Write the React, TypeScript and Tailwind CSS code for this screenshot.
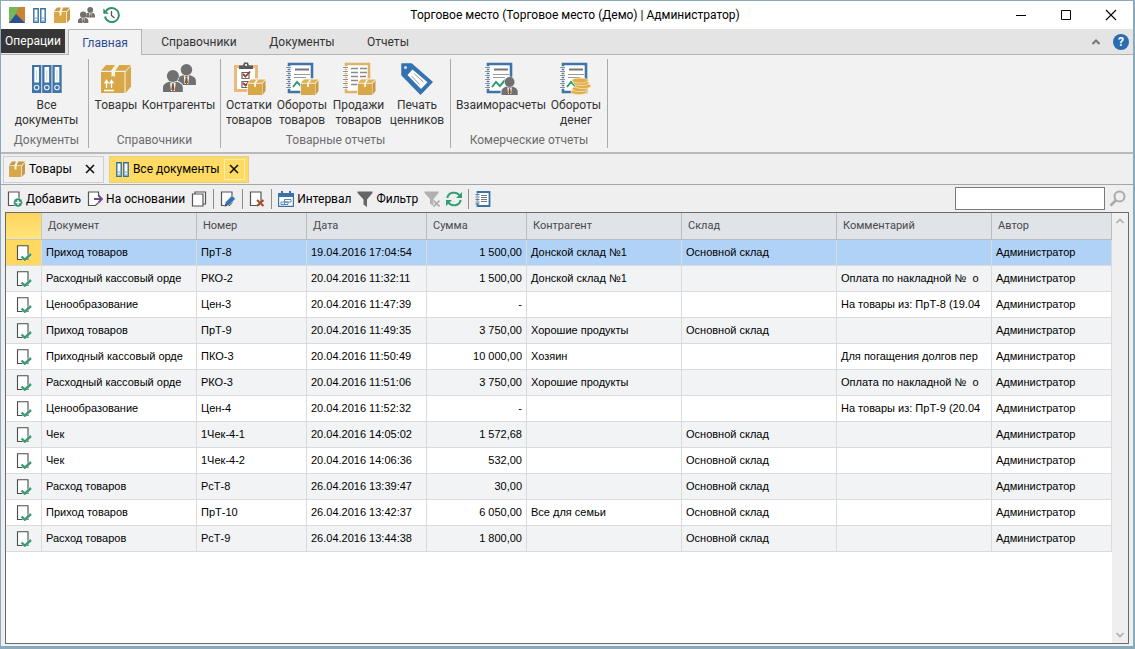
import { useState, type ReactNode } from "react";

type IconProps = { className?: string };

function svg(viewBox: string, body: ReactNode) {
  return function Icon({ className }: IconProps) {
    return (
      <svg viewBox={viewBox} className={className} fill="none" aria-hidden="true">
        {body}
      </svg>
    );
  };
}

const binder = (x: number) => (
  <g key={x}>
    <path d={`M${x} 3h9.300v28h-9.300z`} fill="#3f74a8" />
    <path d={`M${x + 2.3} 5h4.600v15.500h-4.600z`} fill="#fff" />
    <path d={`M${x + 4.6} 8v10`} stroke="#c3d3e2" />
    <circle cx={x + 4.6} cy="25.500" r="2.3" stroke="#e8eff6" strokeWidth="1.1" />
  </g>
);

const notebook = (color: string) => (
  <>
    <path d="M4 2h23v28H4z" fill="#fff" stroke={color} strokeWidth="2.6" />
    <path d="M1 5.5h5M1 9.5h5M1 13.5h5M1 17.5h5M1 21.5h5M1 25.5h5" stroke="#fff" strokeWidth="2.4" />
    <path d="M1 5.5h5M1 9.5h5M1 13.5h5M1 17.5h5M1 21.5h5M1 25.5h5" stroke="#8a8f96" strokeWidth="1.2" />
  </>
);

const reportLines = (
  <>
    <path d="M10 7.5h14" stroke="#777" strokeWidth="2" />
    <path d="M9 12.5h16M9 15.5h12" stroke="#9a9a9a" />
    <path d="M8 25l4-5 4 4 5-6" stroke="#2f9c74" strokeWidth="2" />
  </>
);

const smallBox = (
  <g>
    <path d="M16 22l3-5h14.500l-2 5v11H16z" fill="#f2f2f2" stroke="#f2f2f2" strokeWidth="1.500" />
    <path d="M16 21.500h14v11.500H16z" fill="#d8a748" />
    <path d="M16 21l3-3.500h14.500l-3.500 3.500z" fill="#deb25a" />
    <path d="M30.500 21.500l3-3.500v11l-3 4z" fill="#c99a42" />
    <path d="M16 21.300h14.500l3-3.500" stroke="#f8ecd0" strokeWidth=".8" />
    <path d="M22 21.300l2.300-3.600h2L24 21.300v4l-1-.8-1 .8z" fill="#fdf4df" />
  </g>
);

const person = (x: number, y: number, k: number, halo: string) => (
  <g transform={`translate(${x} ${y}) scale(${k})`}>
    <path
      d="M0 20v-4c0-3 3-4.500 6-5.500l3 1 3-1c3 1 6 2.500 6 5.500v4z"
      fill="#707070"
      stroke={halo}
      strokeWidth="2"
      paintOrder="stroke"
    />
    <circle cx="9" cy="5.5" r="5.5" fill="#707070" stroke={halo} strokeWidth="1" paintOrder="stroke" />
    <path d="M6.500 11.500l2.500 1 2.500-1-.8 7.500H7.300z" fill="#fff" />
    <path d="M8.200 12.500h1.600l.6 5-1.400 2-1.400-2z" fill="#8a4f2c" />
  </g>
);

const LogoIcon = svg(
  "0 0 16 16",
  <>
    <path d="M0 0h16v16H0z" fill="#72b95b" />
    <path d="M10 0h6v16L6 8z" fill="#c98333" />
    <path d="M0 16L7 7l9 9z" fill="#304e94" />
  </>,
);
const BindersIcon = svg("0 0 30 32", [0, 10.2, 20.4].map(binder));
const TwoBindersIcon = svg(
  "0 0 13 15",
  <>
    {[0, 7].map((x) => (
      <g key={x}>
        <path d={`M${x + 0.8} .8h4.4v13.4h-4.4z`} fill="#fff" stroke="#35709f" strokeWidth="1.4" />
        <path d={`M${x + 1} 9.5h4v4h-4z`} fill="#8eb3cf" />
        <circle cx={x + 3} cy="11.5" r="1" fill="#fff" />
      </g>
    ))}
  </>,
);
const BoxIcon = svg(
  "0 0 32 32",
  <>
    <path d="M1 10h23.500v21H1z" fill="#d8a748" />
    <path d="M1 8.800L6 3h9l-4 5.800zM15 8.800L19 3h12l-5.500 5.800z" fill="#d8a748" />
    <path d="M25.500 10L31 4v20.500L25.500 31z" fill="#d8a748" />
    <path d="M11.500 9L15.500 3H19l-4 6v6l-1.800-1.200-1.700 1.200z" fill="#fdf4df" />
    <path d="M6.500 26v-7M11.500 26v-7M4 28.500h10M4.500 21.500l2-3 2 3M9.500 21.500l2-3 2 3" stroke="#fff" strokeWidth="1.300" />
  </>,
);
const TinyBoxIcon = svg(
  "0 0 16 16",
  <>
    <path d="M0 5h12v11H0z" fill="#d8a748" />
    <path d="M0 4.200L3 .5h4L5.500 4.200zM7.500 4.200L9 .5h7l-3.500 3.700z" fill="#c99a45" />
    <path d="M12.800 5.200L16 1.500v11L12.800 16z" fill="#c99a45" />
    <path d="M5.500 4.500L7.300.5H9L7.500 4.500v4h-2z" fill="#fdf4df" />
  </>,
);
const PeopleIcon = svg(
  "0 0 34 32",
  <>
    {person(15, 2, 1.05, "#f2f2f2")}
    {person(1, 8, 1.1, "#f2f2f2")}
  </>,
);
const TinyPeopleIcon = svg(
  "0 0 34 32",
  <>
    {person(15, 0, 1.05, "#ffffff")}
    {person(0, 9, 1.15, "#ffffff")}
  </>,
);
const HistoryIcon = svg(
  "0 0 17 16",
  <>
    <path d="M3 4.200A7 7 0 1 1 2 9.500" stroke="#2f8f6c" strokeWidth="1.900" />
    <path d="M.3 1.500v5.300h5.500z" fill="#2f8f6c" />
    <path d="M8.500 4v4.500l3 2.500" stroke="#555" strokeWidth="1.300" />
  </>,
);
const StockIcon = svg(
  "0 0 34 34",
  <>
    <path d="M3.500 4.500h21v24h-21z" fill="#fff" stroke="#ecb97b" strokeWidth="3" />
    <path d="M7 7V3.500h4l1-3h4l1 3h4V7z" fill="#56595f" />
    <circle cx="14" cy="3" r="1.100" fill="#fff" />
    <path d="M10 10.500h7v6h-7zM10 19.500h7v6h-7z" fill="#fff" stroke="#666" strokeWidth="1.200" />
    <path d="M11 12l2.500 2.500L18 9.500M11 21l2.500 2.500L17 20" stroke="#a23a28" strokeWidth="1.800" />
    {smallBox}
  </>,
);
const TurnoverIcon = svg("0 0 34 34", <>{notebook("#3f74a8")}{reportLines}{smallBox}</>);
const SalesIcon = svg(
  "0 0 34 34",
  <>
    {notebook("#dfb36a")}
    <path d="M9 6.500h7M18 6.500h7M9 10.500h7M18 10.500h7M9 14.500h7M9 18.500h7M18 18.500h7M9 22.500h7" stroke="#8b8b8b" strokeWidth="1.400" />
    <path d="M18 14.500h6" stroke="#b76b5a" strokeWidth="1.400" />
    {smallBox}
  </>,
);
const TagIcon = svg(
  "0 0 34 34",
  <>
    <path d="M2 2h9.500l20.500 18-11.500 12L2 13z" fill="#3472b0" stroke="#3472b0" strokeWidth="1.500" strokeLinejoin="round" />
    <path d="M12.500 7.500L27.500 20.300l-6.500 6.700L7.500 13z" fill="#fff" />
    <circle cx="5.500" cy="5.500" r="1.500" fill="#d5e4f2" />
    <path d="M14 11.500l9.500 8.500M11.500 14l8 8.500" stroke="#9a9a9a" />
  </>,
);
const SettlementIcon = svg("0 0 34 34", <>{notebook("#3f74a8")}{reportLines}{person(17.5, 15, 0.9, "#f2f2f2")}</>);
const MoneyIcon = svg(
  "0 0 34 34",
  <>
    {notebook("#3f74a8")}
    {reportLines}
    {[
      [20, 30],
      [21, 27],
      [24, 24],
      [22, 21],
      [21, 18.5],
    ].map(([cx, cy]) => (
      <ellipse key={cy} cx={cx} cy={cy} rx="8" ry="2.600" fill="#e0ac4c" stroke="#f8e3b0" strokeWidth=".8" />
    ))}
  </>,
);
const page = <path d="M1.500 1h10.500v10.500l-2.500 3h-8z" fill="#fff" stroke="#555" strokeWidth="1.200" />;
const AddIcon = svg(
  "0 0 16 16",
  <>
    {page}
    <circle cx="11" cy="11.500" r="4.500" fill="#2f9271" stroke="#efefef" strokeWidth=".6" />
    <path d="M11 9v5M8.500 11.500h5" stroke="#fff" strokeWidth="1.300" />
  </>,
);
const BasedOnIcon = svg(
  "0 0 16 16",
  <>
    <path d="M11.500 5V1h-10v13.500h7l3-3" fill="#fff" stroke="#555" strokeWidth="1.200" />
    <path d="M7 8h8M11.500 4.500L15 8l-3.500 3.500" stroke="#6b4a85" strokeWidth="1.900" />
  </>,
);
const CopyIcon = svg(
  "0 0 16 16",
  <>
    <path d="M4 1h10.500v12H4z" fill="#fff" stroke="#555" strokeWidth="1.200" />
    <path d="M1.500 3h10.500v12H1.500z" fill="#fff" stroke="#555" strokeWidth="1.200" />
  </>,
);
const EditIcon = svg(
  "0 0 16 16",
  <>
    {page}
    <path d="M4.500 15.500l1-4.500 6.500-6.500 3.500 3.300-6.500 6.500z" fill="#3474b4" stroke="#efefef" strokeWidth=".6" />
    <path d="M4.500 15.500l.8-2.800 2 2z" fill="#444" />
  </>,
);
const DeleteIcon = svg(
  "0 0 16 16",
  <>
    {page}
    <path d="M8 9l6.500 6M14.500 9L8 15" stroke="#a4512e" strokeWidth="2.200" />
  </>,
);
const CheckedPageIcon = svg(
  "0 0 16 16",
  <>
    <path d="M1.500 .8h10.500v13.700H1.500z" fill="#fff" stroke="#4b4b4b" strokeWidth="1.100" />
    <path d="M5.500 11.500l3.300 3.200L15 9" stroke="#fff" strokeWidth="3.600" strokeOpacity=".6" />
    <path d="M5.500 11.500l3.300 3.200L15 9" stroke="#3b9a72" strokeWidth="2.400" />
  </>,
);
const CalendarIcon = svg(
  "0 0 16 16",
  <>
    <path d="M.6 2.600h14.800v12.800H.6z" fill="#fff" stroke="#3f6f9c" strokeWidth="1.200" />
    <path d="M0 2h16v4H0zM3 0h2v3H3zM11 0h2v3h-2z" fill="#3a72a8" />
    <path d="M6.500 8.500h6.500v2.500h-6.500zM3 11h7v2.500H3zM6.500 8.500v5" stroke="#5b8ab5" />
  </>,
);
const FunnelIcon = svg("0 0 16 16", <path d="M.5 .5h15v1.500L10 8.500V16l-3.500-2.500v-5L.5 2z" fill="#666" />);
const FunnelOffIcon = svg(
  "0 0 16 16",
  <>
    <path d="M.5 .5h14v1.500L9.500 8v7L6 12.500V8L.5 2z" fill="#b0b0b0" />
    <path d="M9.500 9.500l6 6M15.500 9.500l-6 6" stroke="#efefef" strokeWidth="3" />
    <path d="M9.500 9.500l6 6M15.500 9.500l-6 6" stroke="#aaa" strokeWidth="1.700" />
  </>,
);
const RefreshIcon = svg(
  "0 0 16 16",
  <>
    <path d="M1.300 7A6.700 6.300 0 0 1 13.500 4.500M14.700 9A6.700 6.300 0 0 1 2.500 11.500" stroke="#2fa071" strokeWidth="2" />
    <path d="M16 1v6h-6zM0 15V9h6z" fill="#2fa071" />
  </>,
);
const ListIcon = svg(
  "0 0 16 16",
  <>
    <path d="M2.500 1h12v14h-12z" fill="#fff" stroke="#3a72a8" strokeWidth="1.800" />
    <path d="M6 4.500h6M6 6.500h6M6 8.500h6M6 10.500h6" stroke="#777" />
    <path d="M.5 3.500h4M.5 6h4M.5 8.500h4M.5 11h4" stroke="#efefef" strokeWidth="1.800" />
    <path d="M.5 3.500h4M.5 6h4M.5 8.500h4M.5 11h4M.5 13h4" stroke="#66809b" />
  </>,
);
const SearchIcon = svg(
  "0 0 17 17",
  <>
    <circle cx="10.500" cy="6.500" r="5" stroke="#aaa" strokeWidth="2" />
    <path d="M7 10.200l-5.500 5.300" stroke="#aaa" strokeWidth="2.600" />
  </>,
);
const CrossIcon = svg("0 0 10 10", <path d="M1 1l8 8M9 1L1 9" stroke="#111" strokeWidth="1.600" />);
const MinimizeIcon = svg("0 0 12 12", <path d="M1 6.500h10" stroke="#000" />);
const MaximizeIcon = svg("0 0 12 12", <path d="M1.500 1.500h9v9h-9z" stroke="#000" />);
const CloseIcon = svg("0 0 12 12", <path d="M1 1l10 10M11 1L1 11" stroke="#000" strokeWidth="1.100" />);
const ChevronUpIcon = svg("0 0 10 8", <path d="M1.500 6L5 2.500 8.500 6" stroke="#757575" strokeWidth="2" />);
const ThinUpIcon = svg("0 0 10 8", <path d="M1.500 6L5 2.500 8.500 6" stroke="#b0b0b0" strokeWidth="1.700" />);
const ThinDownIcon = svg("0 0 10 8", <path d="M1.500 2L5 5.500 8.500 2" stroke="#b0b0b0" strokeWidth="1.700" />);

type IconType = (p: IconProps) => ReactNode;
type RibbonItem = { icon: IconType; lines: string[]; width: string; size: string };

const ribbonGroups: { title: string; items: RibbonItem[] }[] = [
  {
    title: "Документы",
    items: [{ icon: BindersIcon, lines: ["Все", "документы"], width: "w-[77px]", size: "w-[30px]" }],
  },
  {
    title: "Справочники",
    items: [
      { icon: BoxIcon, lines: ["Товары"], width: "w-[48px]", size: "w-8" },
      { icon: PeopleIcon, lines: ["Контрагенты"], width: "w-[77px]", size: "w-[34px]" },
    ],
  },
  {
    title: "Товарные отчеты",
    items: [
      { icon: StockIcon, lines: ["Остатки", "товаров"], width: "w-[50px]", size: "w-[34px]" },
      { icon: TurnoverIcon, lines: ["Обороты", "товаров"], width: "w-[56px]", size: "w-[34px]" },
      { icon: SalesIcon, lines: ["Продажи", "товаров"], width: "w-[57px]", size: "w-[34px]" },
      { icon: TagIcon, lines: ["Печать", "ценников"], width: "w-[60px]", size: "w-[34px]" },
    ],
  },
  {
    title: "Комерческие отчеты",
    items: [
      { icon: SettlementIcon, lines: ["Взаиморасчеты"], width: "w-[94px]", size: "w-[34px]" },
      { icon: MoneyIcon, lines: ["Обороты", "денег"], width: "w-[56px]", size: "w-[34px]" },
    ],
  },
];

const columns = [
  { title: "Документ", width: "w-[155px]" },
  { title: "Номер", width: "w-[110px]" },
  { title: "Дата", width: "w-[120px]" },
  { title: "Сумма", width: "w-[100px]" },
  { title: "Контрагент", width: "w-[155px]" },
  { title: "Склад", width: "w-[155px]" },
  { title: "Комментарий", width: "w-[155px]" },
  { title: "Автор", width: "" },
];

const rows: string[][] = [
  ["Приход товаров", "ПрТ-8", "19.04.2016 17:04:54", "1 500,00", "Донской склад №1", "Основной склад", "", "Администратор"],
  ["Расходный кассовый орде", "РКО-2", "20.04.2016 11:32:11", "1 500,00", "Донской склад №1", "", "Оплата по накладной №  о", "Администратор"],
  ["Ценообразование", "Цен-3", "20.04.2016 11:47:39", "-", "", "", "На товары из: ПрТ-8 (19.04", "Администратор"],
  ["Приход товаров", "ПрТ-9", "20.04.2016 11:49:35", "3 750,00", "Хорошие продукты", "Основной склад", "", "Администратор"],
  ["Приходный кассовый орде", "ПКО-3", "20.04.2016 11:50:49", "10 000,00", "Хозяин", "", "Для погащения долгов пер", "Администратор"],
  ["Расходный кассовый орде", "РКО-3", "20.04.2016 11:51:06", "3 750,00", "Хорошие продукты", "", "Оплата по накладной №  о", "Администратор"],
  ["Ценообразование", "Цен-4", "20.04.2016 11:52:32", "-", "", "", "На товары из: ПрТ-9 (20.04", "Администратор"],
  ["Чек", "1Чек-4-1", "20.04.2016 14:05:02", "1 572,68", "", "Основной склад", "", "Администратор"],
  ["Чек", "1Чек-4-2", "20.04.2016 14:06:36", "532,00", "", "Основной склад", "", "Администратор"],
  ["Расход товаров", "РсТ-8", "26.04.2016 13:39:47", "30,00", "", "Основной склад", "", "Администратор"],
  ["Приход товаров", "ПрТ-10", "26.04.2016 13:42:37", "6 050,00", "Все для семьи", "Основной склад", "", "Администратор"],
  ["Расход товаров", "РсТ-9", "26.04.2016 13:44:38", "1 800,00", "", "Основной склад", "", "Администратор"],
];

function TitleBar() {
  const quick: [string, IconType, string][] = [
    ["Торговое место", LogoIcon, "w-4"],
    ["Все документы", TwoBindersIcon, "w-[13px]"],
    ["Товары", TinyBoxIcon, "w-4"],
    ["Контрагенты", TinyPeopleIcon, "w-[17px]"],
    ["История", HistoryIcon, "w-[17px]"],
  ];
  const controls: [string, IconType][] = [
    ["Свернуть", MinimizeIcon],
    ["Развернуть", MaximizeIcon],
    ["Закрыть", CloseIcon],
  ];
  return (
    <header className="grid h-7 grid-cols-[1fr_auto_1fr] items-center bg-white">
      <div className="flex items-center gap-2 pl-2">
        {quick.map(([label, Icon, size]) => (
          <button key={label} aria-label={label} className="flex">
            <Icon className={size} />
          </button>
        ))}
      </div>
      <h1 className="pl-4 text-black">Торговое место (Торговое место (Демо) | Администратор)</h1>
      <div className="flex justify-end">
        {controls.map(([label, Icon]) => (
          <button key={label} aria-label={label} className="flex w-[45px] justify-center">
            <Icon className="w-3" />
          </button>
        ))}
      </div>
    </header>
  );
}

function RibbonTabs() {
  return (
    <nav className="flex h-[26px] border-b border-[#b4b4b4] bg-[#e4e4e4]">
      <button className="h-6 w-16 bg-[#363636] text-white">Операции</button>
      <button className="ml-[3px] -mb-px w-[74px] border border-b-0 border-[#b4b4b4] bg-[#f2f2f2] text-[#2f4b93]">
        Главная
      </button>
      <button className="w-[114px]">Справочники</button>
      <button className="w-[92px]">Документы</button>
      <button className="w-20">Отчеты</button>
      <div className="ml-auto flex items-center gap-2 pr-1">
        <button aria-label="Свернуть ленту" className="flex p-1">
          <ChevronUpIcon className="w-[10px]" />
        </button>
        <button
          aria-label="Справка"
          className="flex size-4 items-center justify-center rounded-full bg-[#2a6cb0] font-bold text-white"
        >
          ?
        </button>
      </div>
    </nav>
  );
}

function Ribbon() {
  return (
    <div className="flex h-[99px] border-b-2 border-[#b9b9b9] bg-[#f2f2f2] py-1 pl-1">
      {ribbonGroups.map((group) => (
        <section key={group.title} className="flex flex-col border-r border-[#ababab] px-[3px]">
          <div className="flex h-[75px]">
            {group.items.map(({ icon: Icon, lines, width, size }) => (
              <button key={lines.join()} className={`flex flex-col items-center pt-[3px] ${width}`}>
                <span className="flex h-9 shrink-0 items-start">
                  <Icon className={size} />
                </span>
                {lines.map((line) => (
                  <span key={line} className="whitespace-nowrap leading-[15px]">
                    {line}
                  </span>
                ))}
              </button>
            ))}
          </div>
          <h2 className="text-center leading-[15px] text-[#6c6c6c]">{group.title}</h2>
        </section>
      ))}
    </div>
  );
}

function DocumentTabs() {
  return (
    <div className="flex h-[31px] items-center gap-[5px] border-b border-[#a5a5a5] bg-[#efefef] pl-[2px]">
      <div className="flex h-[27px] items-center border border-[#cfcfcf] bg-[#f1f1f1] pl-[5px]">
        <button className="flex items-center gap-1 text-black">
          <TinyBoxIcon className="w-4" />
          Товары
        </button>
        <button aria-label="Закрыть Товары" className="ml-[13px] mr-2 flex">
          <CrossIcon className="w-[10px]" />
        </button>
      </div>
      <div className="flex h-[27px] items-center border border-[#e5cf85] bg-[#ffdb63] pl-1.5">
        <button className="flex items-center gap-1 text-black">
          <TwoBindersIcon className="w-[13px]" />
          Все документы
        </button>
        <button
          aria-label="Закрыть Все документы"
          className="ml-1 mr-[3px] flex size-[21px] items-center justify-center border border-[#ffeda8]"
        >
          <CrossIcon className="w-[10px]" />
        </button>
      </div>
    </div>
  );
}

function ToolButton({ icon: Icon, label, text }: { icon: IconType; label: string; text?: boolean }) {
  return (
    <button aria-label={label} className="flex items-center gap-[3px] whitespace-nowrap text-black">
      <Icon className="w-4 shrink-0" />
      {text && label}
    </button>
  );
}

const Divider = () => <span className="h-5 w-px bg-[#8f8f8f]" />;

function Toolbar() {
  const [query, setQuery] = useState("");
  return (
    <div className="flex h-[27px] items-center gap-1.5 bg-[#efefef] pl-1.5 pr-[7px]">
      <ToolButton icon={AddIcon} label="Добавить" text />
      <ToolButton icon={BasedOnIcon} label="На основании" text />
      <ToolButton icon={CopyIcon} label="Копировать" />
      <Divider />
      <ToolButton icon={EditIcon} label="Изменить" />
      <Divider />
      <ToolButton icon={DeleteIcon} label="Удалить" />
      <Divider />
      <ToolButton icon={CalendarIcon} label="Интервал" text />
      <ToolButton icon={FunnelIcon} label="Фильтр" text />
      <ToolButton icon={FunnelOffIcon} label="Сбросить фильтр" />
      <ToolButton icon={RefreshIcon} label="Обновить" />
      <Divider />
      <ToolButton icon={ListIcon} label="Список" />
      <form className="ml-auto flex items-center gap-1" onSubmit={(e) => e.preventDefault()}>
        <input
          type="search"
          aria-label="Поиск"
          value={query}
          onChange={(e) => setQuery(e.target.value)}
          className="h-[23px] w-[150px] border border-[#7a7a7a] bg-white px-1 outline-none"
        />
        <button aria-label="Найти" className="flex">
          <SearchIcon className="w-[17px]" />
        </button>
      </form>
    </div>
  );
}

function DocumentTable() {
  const [selected, setSelected] = useState(0);
  return (
    <div className="mx-1 mb-[2px] flex flex-1 border border-[#6b6b6b] bg-white">
      <div className="min-w-0 flex-1">
        <table className="w-full table-fixed border-separate border-spacing-0 font-['Liberation_Sans',sans-serif] text-[11px]">
          <thead>
            <tr className="h-[27px]">
              <th
                aria-label="Состояние"
                className="w-[36px] border-b border-r border-[#c4c6ca] bg-linear-to-b from-[#ffd45c] to-[#ffe67c]"
              />
              {columns.map((c) => (
                <th
                  key={c.title}
                  className={`border-b border-r border-[#b9bbc0] bg-[#e0e3e8] px-1.5 text-left font-['Roboto',sans-serif] font-normal text-[#4a4a4a] ${c.width}`}
                >
                  {c.title}
                </th>
              ))}
            </tr>
          </thead>
          <tbody>
            {rows.map((row, i) => (
              <tr
                key={i}
                onClick={() => setSelected(i)}
                className={`h-[26px] text-black ${i === selected ? "bg-[#b1d2f7]" : i % 2 ? "bg-[#f1f3f5]" : "bg-white"}`}
              >
                <td className={`border-b border-r border-[#d9dbdf] ${i === selected ? "bg-[#ffd95f]" : ""}`}>
                  <CheckedPageIcon className="ml-[10px] w-4" />
                </td>
                {row.map((cell, j) => (
                  <td
                    key={j}
                    className={`overflow-hidden whitespace-pre border-b border-r border-[#d9dbdf] px-1 ${j === 3 ? "text-right" : ""}`}
                  >
                    {cell}
                  </td>
                ))}
              </tr>
            ))}
          </tbody>
        </table>
      </div>
      <div className="flex w-[16px] flex-col items-center justify-between bg-[#efefef] py-1">
        <button aria-label="Прокрутить вверх" className="flex">
          <ThinUpIcon className="w-[10px]" />
        </button>
        <button aria-label="Прокрутить вниз" className="flex">
          <ThinDownIcon className="w-[10px]" />
        </button>
      </div>
    </div>
  );
}

export default function App() {
  return (
    <div className="flex min-h-screen flex-col border border-b-[3px] border-r-2 border-[#8aa9ba] bg-[#efefef] font-['Roboto','Noto_Sans',sans-serif] text-[12px] text-[#333]">
      <TitleBar />
      <RibbonTabs />
      <Ribbon />
      <DocumentTabs />
      <Toolbar />
      <DocumentTable />
    </div>
  );
}
